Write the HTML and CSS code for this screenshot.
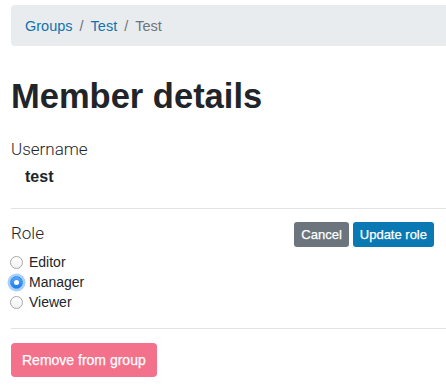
FILE: index.html
```html
<!DOCTYPE html>
<html>
<head>
<meta charset="utf-8">
<link rel="stylesheet" href="styles.css">
</head>
<body>
<div class="page">
  <nav class="crumbs">
    <a class="crumb-link" href="#">Groups</a>
    <span class="sep">/</span>
    <a class="crumb-link" href="#">Test</a>
    <span class="sep">/</span>
    <span class="crumb-active">Test</span>
  </nav>
  <h1 class="title">Member details</h1>
  <div class="field-label">Username</div>
  <div class="username">test</div>
  <hr class="rule rule-top">
  <div class="role-row">
    <div class="role-col">
      <div class="field-label role-label">Role</div>
      <div class="radios">
        <label class="radio"><span class="dot"></span><span class="radio-text">Editor</span></label>
        <label class="radio"><span class="dot dot-on"></span><span class="radio-text">Manager</span></label>
        <label class="radio"><span class="dot"></span><span class="radio-text">Viewer</span></label>
      </div>
    </div>
    <div class="actions">
      <button class="btn btn-sm btn-grey">Cancel</button>
      <button class="btn btn-sm btn-blue">Update role</button>
    </div>
  </div>
  <hr class="rule rule-bottom">
  <button class="btn btn-danger">Remove from group</button>
</div>
</body>
</html>
```
FILE: styles.css
```css
html, body {
  margin: 0;
  padding: 0;
  background: #fff;
}
body {
  font-family: "Liberation Sans", Arial, sans-serif;
  color: #212529;
  overflow: hidden;
}
.page {
  padding: 5px 0 0 11px;
}
.crumbs {
  display: flex;
  align-items: center;
  height: 41px;
  background: #e9ecef;
  border-radius: 4px 0 0 4px;
  padding-left: 14px;
  font-size: 14.5px;
}
.crumb-link {
  color: #0f73ad;
  text-decoration: none;
}
.crumb-active {
  color: #6c757d;
}
.sep {
  color: #6c757d;
  padding: 0 7px;
}
.title {
  margin: 30px 0 0;
  font-size: 34.5px;
  line-height: 41px;
  font-weight: bold;
}
.field-label {
  font-family: Roboto, "Liberation Sans", sans-serif;
  font-weight: 300;
  font-size: 17px;
  line-height: 20px;
  margin-top: 22px;
}
.username {
  font-weight: bold;
  font-size: 16px;
  line-height: 20px;
  margin-top: 8px;
  padding-left: 14px;
}
.rule {
  border: 0;
  border-top: 1px solid #e3e3e3;
  margin: 0;
}
.rule-top {
  margin-top: 21px;
}
.role-row {
  display: flex;
  justify-content: space-between;
  align-items: flex-start;
  padding-right: 12px;
  margin-top: 14px;
}
.role-label {
  margin-top: 0;
}
.radios {
  margin-top: 9px;
  display: flex;
  flex-direction: column;
}
.radio {
  display: flex;
  align-items: center;
  height: 20px;
  font-size: 14px;
  margin-left: -1px;
}
.dot {
  width: 11px;
  height: 11px;
  border: 1px solid #a8a8a8;
  border-radius: 50%;
  background: linear-gradient(#ffffff, #f2f2f2);
  flex: none;
  display: flex;
  align-items: center;
  justify-content: center;
}
.dot-on {
  border-color: #2a86e8;
  background: linear-gradient(#58a8fb, #1a7cf0);
  box-shadow: 0 0 0 2.5px rgba(80, 160, 250, 0.5);
}
.dot-on::after {
  content: "";
  width: 5px;
  height: 5px;
  border-radius: 50%;
  background: #fff;
}
.radio-text {
  margin-left: 6px;
}
.actions {
  display: flex;
  gap: 4px;
  margin-top: -1px;
}
.btn {
  font-family: "Liberation Sans", Arial, sans-serif;
  border: 0;
  color: #fff;
  border-radius: 3px;
  cursor: pointer;
  -webkit-text-stroke: 0.25px #fff;
}
.btn-sm {
  height: 25px;
  font-size: 13px;
  padding: 0 7px;
}
.btn-grey {
  background: #6c757d;
}
.btn-blue {
  background: #0a79b3;
}
.rule-bottom {
  margin-top: 16px;
}
.btn-danger {
  margin-top: 14px;
  height: 34px;
  padding: 0 11px;
  font-size: 14px;
  background: #f3718b;
  border-radius: 4px;
}
```
